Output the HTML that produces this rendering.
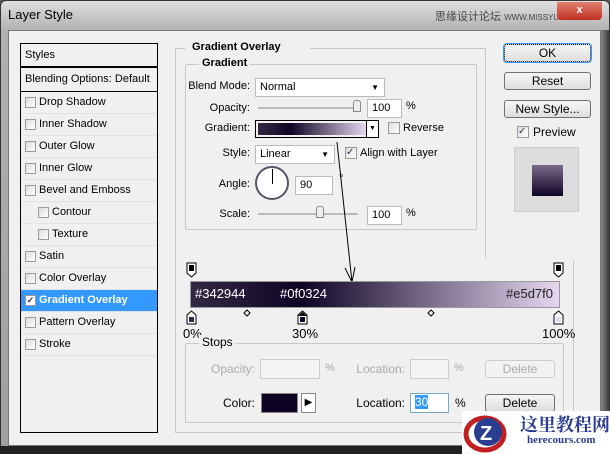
<!DOCTYPE html><html><head><style>
*{margin:0;padding:0;box-sizing:border-box}
body{width:610px;height:454px;overflow:hidden;position:relative;font-family:"Liberation Sans",sans-serif;font-size:11px;color:#000;background:#5a5a5a}
.a{position:absolute}
.frame{left:0;top:0;width:610px;height:454px;background:linear-gradient(#e0e0e0,#b0b0b0 30px,#a0a0a0);border:1px solid #333;border-radius:6px 6px 0 0}
.client{left:8px;top:30px;width:593px;height:416px;background:#f0f0f0;border:1px solid #777}
.bot{left:0;top:446px;width:610px;height:8px;background:#222}
.list{left:20px;top:43px;width:138px;height:390px;border:1px solid #000;background:#f0f0f0}
.row{position:absolute;left:0;width:136px;height:22px;line-height:21px;border-bottom:1px solid #e2e2e2;padding-left:18px}
.cb{position:absolute;width:11px;height:11px;border:1px solid #9a9a9a;background:linear-gradient(135deg,#ddd,#fff)}
.row .cb{left:4px;top:5px}
.grp{border:1px solid #c8c8c8;border-radius:2px}
.lbl{position:absolute;background:#f0f0f0;padding:0 3px;font-weight:bold}
.in{position:absolute;background:#fff;border:1px solid #bbb;height:19px;line-height:17px;padding-left:4px}
.btn{position:absolute;border:1px solid #707070;border-radius:3px;background:linear-gradient(#f6f6f6,#dedede);text-align:center;line-height:16px;font-size:12px}
.r{text-align:right;position:absolute}
.grad{background:linear-gradient(90deg,#342944 0%,#0f0324 30%,#e5d7f0 100%)}
</style></head><body>
<div class="a frame"></div>
<div class="a" style="left:8px;top:7px;font-size:13px;color:#000">Layer Style</div>
<div class="a" style="left:435px;top:8px;font-size:11px;color:#444;font-family:'Liberation Sans','Noto Sans CJK SC',sans-serif">思缘设计论坛 <span style="font-size:8px">WWW.MISSYUAN.COM</span></div>
<div class="a" style="left:557px;top:2px;width:45px;height:18px;background:linear-gradient(#e08070,#c03020);border-radius:0 0 4px 4px;color:#fff;text-align:center;font-weight:bold;line-height:16px">x</div>
<div class="a client"></div>
<div class="a bot"></div>
<div class="a" style="left:601px;top:30px;width:9px;height:416px;background:linear-gradient(90deg,#888,#333)"></div>

<div class="a list">
<div class="row" style="top:0;height:24px;padding-left:4px;line-height:22px;border-bottom:2px solid #000">Styles</div>
<div class="row" style="top:24px;height:24px;padding-left:4px;line-height:22px;border-bottom:1px solid #000">Blending Options: Default</div>
<div class="row" style="top:48px"><span class="cb"></span>Drop Shadow</div>
<div class="row" style="top:70px"><span class="cb"></span>Inner Shadow</div>
<div class="row" style="top:92px"><span class="cb"></span>Outer Glow</div>
<div class="row" style="top:114px"><span class="cb"></span>Inner Glow</div>
<div class="row" style="top:136px"><span class="cb"></span>Bevel and Emboss</div>
<div class="row" style="top:158px;padding-left:31px"><span class="cb" style="left:17px"></span>Contour</div>
<div class="row" style="top:180px;padding-left:31px"><span class="cb" style="left:17px"></span>Texture</div>
<div class="row" style="top:202px"><span class="cb"></span>Satin</div>
<div class="row" style="top:224px"><span class="cb"></span>Color Overlay</div>
<div class="row" style="top:246px;background:#3399ff;color:#fff;font-weight:bold"><span class="cb" style="background:#fff;font-size:9px;color:#335;line-height:9px;text-align:center">✓</span>Gradient Overlay</div>
<div class="row" style="top:268px"><span class="cb"></span>Pattern Overlay</div>
<div class="row" style="top:290px"><span class="cb"></span>Stroke</div>
</div>

<svg class="a" style="left:0;top:0" width="610" height="454"><path d="M185.5 48.5H175.5V432.5H573.5V260M485.5 48.5V258M310 48.5H485.5" stroke="#c8c8c8" fill="none"/></svg>
<div class="lbl" style="left:189px;top:41px">Gradient Overlay</div>
<div class="a grp" style="left:185px;top:64px;width:292px;height:166px"></div>
<div class="lbl" style="left:199px;top:57px">Gradient</div>

<div class="r" style="right:360px;top:80px">Blend Mode:</div>
<div class="in" style="left:255px;top:78px;width:130px">Normal<span style="position:absolute;right:5px;top:0;font-size:8px">▼</span></div>
<div class="r" style="right:360px;top:102px">Opacity:</div>
<div class="a" style="left:258px;top:107px;width:100px;height:2px;background:#bbb"></div>
<div class="a" style="left:353px;top:100px;width:8px;height:12px;background:#eee;border:1px solid #888;border-radius:3px 3px 0 0"></div>
<div class="in" style="left:367px;top:99px;width:35px">100</div><div class="a" style="left:406px;top:100px">%</div>
<div class="r" style="right:360px;top:122px">Gradient:</div>
<div class="a" style="left:255px;top:120px;width:124px;height:18px;border:1px solid #000"><div class="grad" style="position:absolute;left:2px;top:2px;width:108px;height:12px"></div><div style="position:absolute;right:0;top:0;width:12px;height:16px;border-left:1px solid #000;background:#fff;font-size:7px;text-align:center;line-height:16px">▼</div></div>
<span class="cb a" style="left:388px;top:122px;width:12px;height:12px"></span><div class="a" style="left:403px;top:122px">Reverse</div>
<div class="r" style="right:360px;top:147px">Style:</div>
<div class="in" style="left:255px;top:145px;width:80px">Linear<span style="position:absolute;right:5px;top:0;font-size:8px">▼</span></div>
<span class="cb a" style="left:345px;top:147px;width:12px;height:12px;font-size:10px;line-height:10px;color:#335">✓</span><div class="a" style="left:360px;top:147px">Align with Layer</div>
<div class="r" style="right:360px;top:178px">Angle:</div>
<div class="a" style="left:255px;top:166px;width:34px;height:34px;border:2px solid #556;border-radius:50%;background:#fff"><div style="position:absolute;left:15px;top:1px;width:1px;height:15px;background:#000"></div></div>
<div class="in" style="left:295px;top:176px;width:38px">90</div><div class="a" style="left:339px;top:173px">°</div>
<div class="r" style="right:360px;top:208px">Scale:</div>
<div class="a" style="left:258px;top:213px;width:100px;height:2px;background:#bbb"></div>
<div class="a" style="left:316px;top:206px;width:8px;height:12px;background:#eee;border:1px solid #888;border-radius:3px 3px 0 0"></div>
<div class="in" style="left:367px;top:206px;width:35px">100</div><div class="a" style="left:406px;top:207px">%</div>

<div class="btn" style="left:504px;top:44px;width:87px;height:18px;border:1px dotted #000;box-shadow:0 0 0 1px #39f">OK</div>
<div class="btn" style="left:504px;top:72px;width:87px;height:18px">Reset</div>
<div class="btn" style="left:504px;top:100px;width:87px;height:18px">New Style...</div>
<span class="cb a" style="left:517px;top:126px;width:12px;height:12px;font-size:10px;line-height:10px;color:#335">✓</span><div class="a" style="left:533px;top:125px;font-size:12px">Preview</div>
<div class="a" style="left:514px;top:147px;width:65px;height:65px;background:#ddd;border:1px solid #ccc"><div style="position:absolute;left:17px;top:17px;width:31px;height:31px;background:linear-gradient(#7a6c8a,#0f0324)"></div></div>

<svg class="a" style="left:0;top:0" width="610" height="454"><path d="M337 142 L352 282 M345 268 L352 282 L355 267" stroke="#000" fill="none"/>
<path d="M187 263h9v10l-4.5 4l-4.5-4z" fill="#fff" stroke="#000"/><rect x="189" y="265" width="5" height="6"/>
<path d="M554 263h9v10l-4.5 4l-4.5-4z" fill="#fff" stroke="#000"/><rect x="556" y="265" width="5" height="6"/>
<path d="M187 324v-9l4.5-4l4.5 4v9z" fill="#fff" stroke="#000"/><rect x="189" y="317" width="5" height="5" fill="#342944"/>
<path d="M298 324v-9l4.5-4l4.5 4v9z" fill="#fff" stroke="#000"/><path d="M298 316l4.5-4l4.5 4z"/><rect x="300" y="317" width="5" height="5" fill="#0f0324"/>
<path d="M554 324v-9l4.5-4l4.5 4v9z" fill="#fff" stroke="#000"/><rect x="556" y="317" width="5" height="5" fill="#e5d7f0"/>
<path d="M247 310l3 3l-3 3l-3-3z M431 310l3 3l-3 3l-3-3z" fill="#fff" stroke="#000"/>
</svg>
<div class="a grad" style="left:190px;top:281px;width:370px;height:27px;border:1px solid #999"></div>
<div class="a" style="left:195px;top:286px;color:#fff;font-size:13px">#342944</div>
<div class="a" style="left:280px;top:286px;color:#fff;font-size:13px">#0f0324</div>
<div class="a" style="left:506px;top:286px;color:#222;font-size:13px">#e5d7f0</div>
<div class="a" style="left:183px;top:326px;font-size:13px">0%</div>
<div class="a" style="left:292px;top:326px;font-size:13px">30%</div>
<div class="a" style="left:542px;top:326px;font-size:13px">100%</div>

<div class="a grp" style="left:185px;top:343px;width:379px;height:80px"></div>
<div class="a" style="left:199px;top:335px;background:#f0f0f0;padding:0 3px;font-size:12px">Stops</div>
<div class="r" style="right:355px;top:362px;color:#aaa;font-size:12px">Opacity:</div>
<div class="a" style="left:260px;top:359px;width:60px;height:20px;border:1px solid #ccc;background:#f4f4f4"></div><div class="a" style="left:325px;top:362px;color:#aaa">%</div>
<div class="r" style="right:205px;top:362px;color:#aaa;font-size:12px">Location:</div>
<div class="a" style="left:410px;top:359px;width:39px;height:20px;border:1px solid #ccc;background:#f4f4f4"></div><div class="a" style="left:454px;top:362px;color:#aaa">%</div>
<div class="btn" style="left:485px;top:360px;width:70px;height:18px;color:#aaa;border-color:#ccc;background:#f2f2f2">Delete</div>
<div class="r" style="right:355px;top:396px;font-size:12px">Color:</div>
<div class="a" style="left:261px;top:393px;width:37px;height:20px;background:#0f0324;border:1px solid #888"></div>
<div class="a" style="left:301px;top:393px;width:15px;height:20px;border:1px solid #888;background:#fff;font-size:10px;line-height:18px;text-align:center">▶</div>
<div class="r" style="right:205px;top:396px;font-size:12px">Location:</div>
<div class="in" style="left:410px;top:393px;width:39px;height:20px;border-color:#7ab"><span style="background:#3399ff;color:#fff;font-size:12px">30</span></div><div class="a" style="left:455px;top:396px;font-size:12px">%</div>
<div class="btn" style="left:485px;top:394px;width:70px;height:18px">Delete</div>

<div class="a" style="left:462px;top:411px;width:148px;height:43px;background:#fff"></div>
<svg class="a" style="left:462px;top:410px" width="50" height="44"><ellipse cx="23" cy="24" rx="19" ry="16" fill="none" stroke="#c02020" stroke-width="5"/><circle cx="26" cy="22" r="14" fill="#2a3d90"/><text x="18" y="30" fill="#fff" font-size="20" font-weight="bold" font-family="Liberation Sans">Z</text></svg>
<div class="a" style="left:520px;top:411px;color:#2a3d90;font-size:18px;font-weight:bold;font-family:'Liberation Serif','Noto Serif CJK SC',serif">这里教程网</div>
<div class="a" style="left:527px;top:434px;color:#2a3d90;font-size:11px;font-weight:bold;font-family:'Liberation Serif',serif">herecours.com</div>
</body></html>
